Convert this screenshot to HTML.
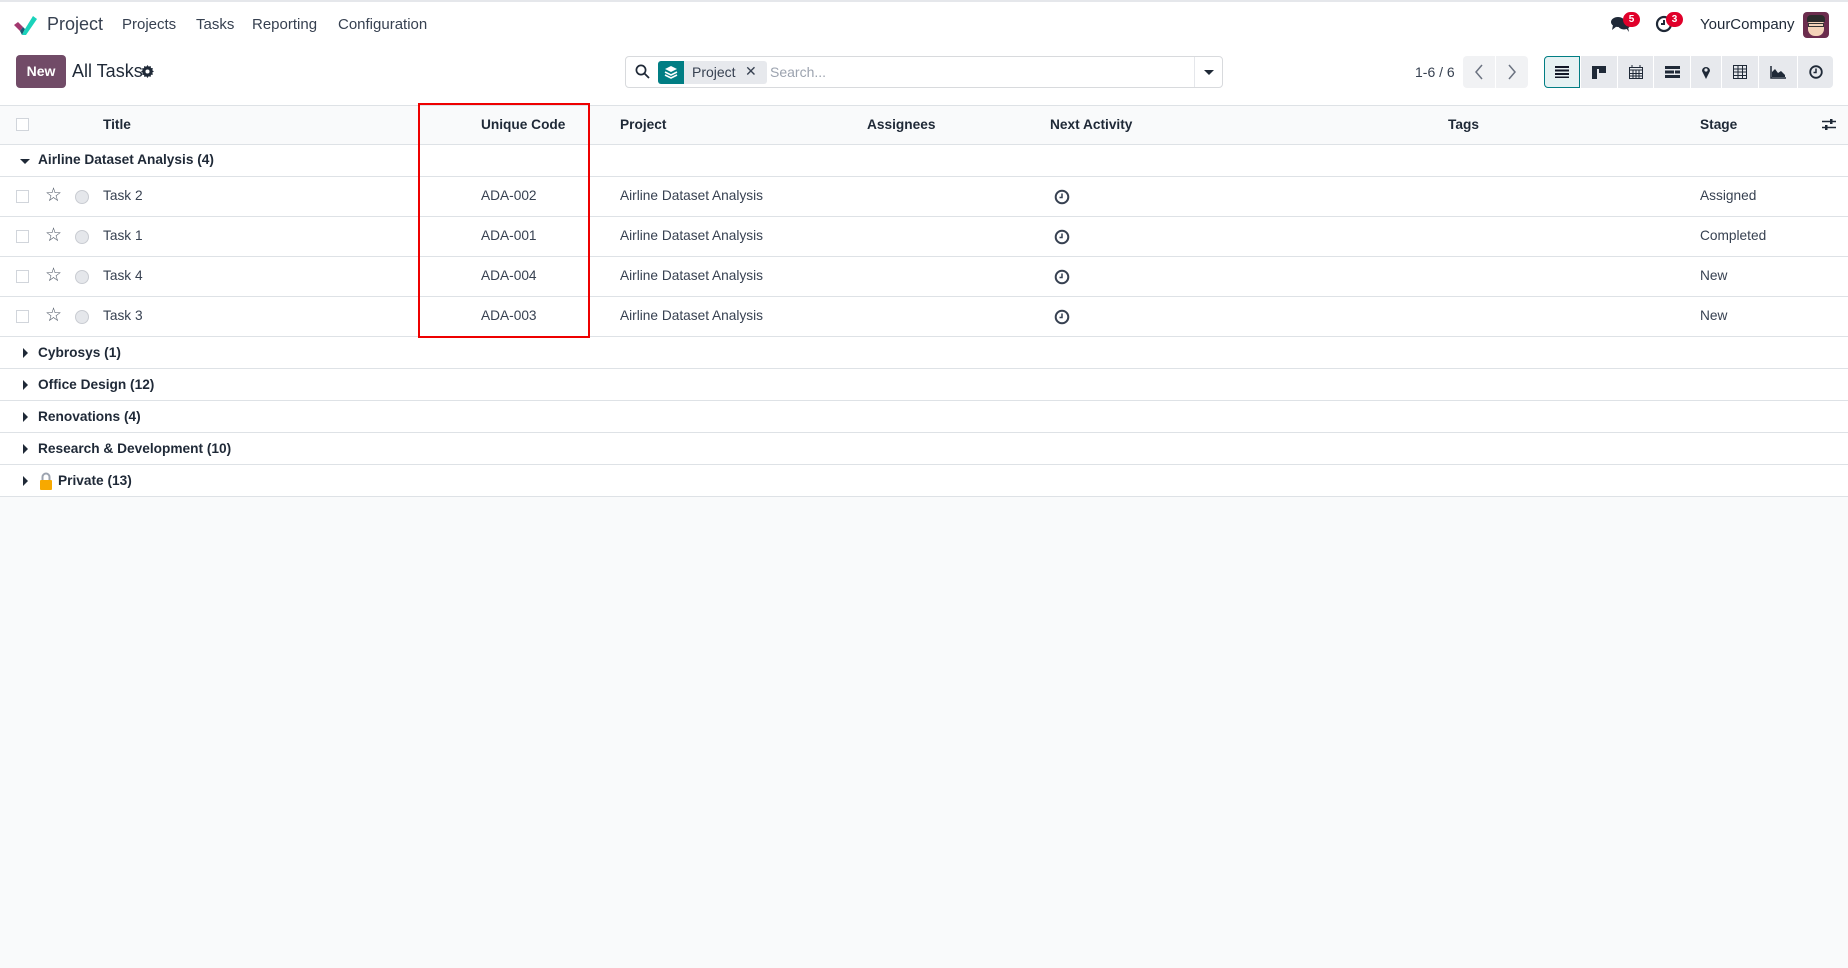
<!DOCTYPE html>
<html><head><meta charset="utf-8">
<style>
*{box-sizing:border-box;margin:0;padding:0}
body{width:1848px;height:968px;background:#f9fafb;font-family:"Liberation Sans",sans-serif;color:#374151;font-size:13.7px;position:relative;overflow:hidden}
.a{position:absolute}
.nav{left:0;top:0;width:1848px;height:50px;background:#fff;border-top:2px solid #e5e7eb}
.cp{left:0;top:50px;width:1848px;height:55px;background:#fff}
.row{position:absolute;left:0;width:1848px;background:#fff;border-bottom:1px solid #dee2e6}
.t{position:absolute;white-space:nowrap}
.b{font-weight:bold;color:#1f2937}
.cb{position:absolute;left:16px;width:13px;height:13px;border:1px solid #d1d5db;background:#fff}
.vb{position:absolute;top:56px;height:32px;background:#e7e9ed;display:flex;align-items:center;justify-content:center}
</style></head><body>
<div class="a nav"></div>
<svg class="a" style="left:13px;top:14px" width="24" height="22" viewBox="0 0 24 22">
<path d="M1 11 L5 8 L10 13 L7 17 Z" fill="#a3386f"/>
<path d="M7 17 L10 13 L12 15 L9 21 Z" fill="#1a5b76"/>
<path d="M9 21 L12 15 L20 2 L24 5 L13 21 Z" fill="#1ad3bb"/>
</svg>
<div class="t" style="left:47px;top:14px;font-size:18px;color:#374151">Project</div>
<div class="t" style="left:122px;top:16px;font-size:15px">Projects</div>
<div class="t" style="left:196px;top:16px;font-size:15px">Tasks</div>
<div class="t" style="left:252px;top:16px;font-size:15px">Reporting</div>
<div class="t" style="left:338px;top:16px;font-size:15px">Configuration</div>
<svg class="a" style="left:1610px;top:15px" width="22" height="18" viewBox="0 0 22 18"><ellipse cx="8" cy="7" rx="7" ry="5" fill="#1f2937"/><ellipse cx="14" cy="10" rx="6" ry="4.5" fill="#1f2937"/><path d="M3 10 L2 15 L7 11Z M16 13 L19 17 L18 12Z" fill="#1f2937"/></svg>
<div class="a" style="left:1623px;top:12px;width:17px;height:15px;border-radius:8px;background:#e0002a;color:#fff;font-size:10px;font-weight:bold;text-align:center;line-height:15px">5</div>
<svg class="a" style="left:1655px;top:15px" width="18" height="18" viewBox="0 0 18 18"><circle cx="9" cy="9" r="7" fill="none" stroke="#1f2937" stroke-width="2.2"/><path d="M9 5 V9 H6" stroke="#1f2937" stroke-width="2" fill="none"/></svg>
<div class="a" style="left:1666px;top:12px;width:17px;height:15px;border-radius:8px;background:#e0002a;color:#fff;font-size:10px;font-weight:bold;text-align:center;line-height:15px">3</div>
<div class="t" style="left:1700px;top:16px;font-size:15px;color:#1f2937">YourCompany</div>
<div class="a" style="left:1803px;top:12px;width:26px;height:26px;border-radius:4px;background:#6b2c4d;overflow:hidden">
<div class="a" style="left:5px;top:6px;width:16px;height:18px;border-radius:7px;background:#f3d3b8"></div>
<div class="a" style="left:4px;top:3px;width:18px;height:7px;border-radius:4px 4px 0 0;background:#2b2b2b"></div>
<div class="a" style="left:5px;top:11px;width:16px;height:4px;border:1px solid #333"></div>
</div>

<div class="a cp"></div>
<div class="a" style="left:16px;top:55px;width:50px;height:33px;background:#714b67;border-radius:4px;color:#fff;font-weight:bold;font-size:14px;text-align:center;line-height:33px">New</div>
<div class="t" style="left:72px;top:61px;font-size:18px;color:#1f2937">All Tasks</div>
<svg class="a" style="left:141px;top:65px" width="13" height="13" viewBox="0 0 16 16"><path d="M8 0l1.5 2 2.4-.8.3 2.5 2.5.3-.8 2.4 2 1.5-2 1.5.8 2.4-2.5.3-.3 2.5-2.4-.8L8 16l-1.5-2-2.4.8-.3-2.5-2.5-.3.8-2.4L0 8l2-1.5-.8-2.4 2.5-.3.3-2.5 2.4.8z" fill="#1f2937"/><circle cx="8" cy="8" r="2.5" fill="#fff"/></svg>
<div class="a" style="left:625px;top:56px;width:598px;height:32px;border:1px solid #d8dadd;border-radius:4px;background:#fff"></div>
<svg class="a" style="left:635px;top:64px" width="15" height="15" viewBox="0 0 15 15"><circle cx="6" cy="6" r="4.6" fill="none" stroke="#1f2937" stroke-width="1.7"/><path d="M9.5 9.5 L14 14" stroke="#1f2937" stroke-width="1.8"/></svg>
<div class="a" style="left:658px;top:61px;width:109px;height:23px;background:#e7e9ed;border-radius:3px"></div>
<div class="a" style="left:658px;top:61px;width:26px;height:23px;background:#017e84;border-radius:3px 0 0 3px"></div>
<svg class="a" style="left:663px;top:65px" width="16" height="15" viewBox="0 0 16 15"><path d="M8 1 L14 4 L8 7 L2 4Z" fill="#fff"/><path d="M2 7 L8 10 L14 7 M2 10 L8 13 L14 10" stroke="#fff" stroke-width="1.6" fill="none"/></svg>
<div class="t" style="left:692px;top:64px;font-size:14px">Project</div>
<div class="t" style="left:745px;top:63px;font-size:14px;color:#374151">✕</div>
<div class="t" style="left:770px;top:64px;font-size:14px;color:#9ca3af">Search...</div>
<div class="a" style="left:1194px;top:57px;width:1px;height:30px;background:#e5e7eb"></div>
<div class="a" style="left:1204px;top:70px;width:0;height:0;border-left:5px solid transparent;border-right:5px solid transparent;border-top:5px solid #1f2937"></div>
<div class="t" style="left:1415px;top:64px;font-size:14px">1-6 / 6</div>
<div class="a" style="left:1463px;top:56px;width:32px;height:32px;background:#f1f2f4;border-radius:4px 0 0 4px"></div>
<div class="a" style="left:1496px;top:56px;width:32px;height:32px;background:#f1f2f4;border-radius:0 4px 4px 0"></div>
<svg class="a" style="left:1474px;top:64px" width="10" height="16"><path d="M8 1 L2 8 L8 15" stroke="#6b7280" stroke-width="1.5" fill="none"/></svg>
<svg class="a" style="left:1507px;top:64px" width="10" height="16"><path d="M2 1 L8 8 L2 15" stroke="#6b7280" stroke-width="1.5" fill="none"/></svg>
<div class="vb" style="left:1544px;width:36px;background:#e6f2f3;border:1px solid #017e84;border-radius:4px 0 0 4px"><svg width="14" height="12"><path d="M0 1H14M0 4.5H14M0 8H14M0 11.5H14" stroke="#111827" stroke-width="2"/></svg></div>
<div class="vb" style="left:1581px;width:36px"><svg width="14" height="13"><rect x="0" y="0" width="14" height="3" fill="#1f2937"/><rect x="0" y="0" width="5" height="13" fill="#1f2937"/><rect x="7" y="0" width="7" height="7" fill="#1f2937"/></svg></div>
<div class="vb" style="left:1618px;width:35px"><svg width="14" height="14"><rect x="0.5" y="2.5" width="13" height="11" fill="none" stroke="#1f2937"/><path d="M0 5H14M3 2V0M11 2V0M0 8.5H14M0 11H14M4 5V14M7 5V14M10 5V14" stroke="#1f2937"/></svg></div>
<div class="vb" style="left:1654px;width:36px"><svg width="15" height="12"><rect x="0" y="0" width="15" height="3" fill="#1f2937"/><rect x="0" y="4.5" width="9" height="3" fill="#1f2937"/><rect x="10" y="4.5" width="5" height="3" fill="#1f2937"/><rect x="0" y="9" width="15" height="3" fill="#1f2937"/></svg></div>
<div class="vb" style="left:1691px;width:30px"><svg width="10" height="14"><path d="M5 14 L1 6 A4 4 0 1 1 9 6Z" fill="#1f2937"/><circle cx="5" cy="5" r="1.6" fill="#e7e9ed"/></svg></div>
<div class="vb" style="left:1722px;width:36px"><svg width="14" height="14"><rect x="0.5" y="0.5" width="13" height="13" fill="none" stroke="#1f2937"/><path d="M0 4H14M0 7H14M0 10.5H14M5 0V14M9.5 0V14" stroke="#1f2937"/></svg></div>
<div class="vb" style="left:1759px;width:38px"><svg width="16" height="13"><path d="M1 0V12H16" stroke="#1f2937" stroke-width="1.5" fill="none"/><path d="M2 11 L2 6 L5 3 L8 7 L11 5 L15 9 L15 11Z" fill="#1f2937"/></svg></div>
<div class="vb" style="left:1798px;width:35px;border-radius:0 4px 4px 0"><svg width="14" height="14"><circle cx="7" cy="7" r="5.8" fill="none" stroke="#1f2937" stroke-width="1.8"/><path d="M7 3.5V7.5H4.5" stroke="#1f2937" stroke-width="1.5" fill="none"/></svg></div>

<div class="row" style="top:105px;height:40px;background:#f9fafb;border-top:1px solid #dee2e6"></div>
<div class="cb" style="top:118px"></div>
<div class="t b" style="left:103px;top:117px">Title</div>
<div class="t b" style="left:481px;top:117px">Unique Code</div>
<div class="t b" style="left:620px;top:117px">Project</div>
<div class="t b" style="left:867px;top:117px">Assignees</div>
<div class="t b" style="left:1050px;top:117px">Next Activity</div>
<div class="t b" style="left:1448px;top:117px">Tags</div>
<div class="t b" style="left:1700px;top:117px">Stage</div>
<svg class="a" style="left:1822px;top:118px" width="14" height="13"><path d="M0 3.5H14M0 9.5H14" stroke="#1f2937" stroke-width="1.5"/><rect x="8" y="1" width="2.5" height="5" fill="#1f2937"/><rect x="3" y="7" width="2.5" height="5" fill="#1f2937"/></svg>

<div class="row" style="top:145px;height:32px"></div>
<div class="a" style="left:20px;top:159px;border-left:5px solid transparent;border-right:5px solid transparent;border-top:5px solid #1f2937"></div>
<div class="t b" style="left:38px;top:152px">Airline Dataset Analysis (4)</div>

<div class="row" style="top:177px;height:40px"></div>
<div class="row" style="top:217px;height:40px"></div>
<div class="row" style="top:257px;height:40px"></div>
<div class="row" style="top:297px;height:40px"></div>

<div class="cb" style="top:190px"></div><div class="cb" style="top:230px"></div><div class="cb" style="top:270px"></div><div class="cb" style="top:310px"></div>
<div class="t" style="left:45px;top:184px;font-size:19px;color:#4b5563">☆</div>
<div class="t" style="left:45px;top:224px;font-size:19px;color:#4b5563">☆</div>
<div class="t" style="left:45px;top:264px;font-size:19px;color:#4b5563">☆</div>
<div class="t" style="left:45px;top:304px;font-size:19px;color:#4b5563">☆</div>
<div class="a" style="left:75px;top:190px;width:14px;height:14px;border-radius:50%;background:#e5e7eb;border:1px solid #c9ccd2"></div>
<div class="a" style="left:75px;top:230px;width:14px;height:14px;border-radius:50%;background:#e5e7eb;border:1px solid #c9ccd2"></div>
<div class="a" style="left:75px;top:270px;width:14px;height:14px;border-radius:50%;background:#e5e7eb;border:1px solid #c9ccd2"></div>
<div class="a" style="left:75px;top:310px;width:14px;height:14px;border-radius:50%;background:#e5e7eb;border:1px solid #c9ccd2"></div>

<div class="t" style="left:103px;top:188px">Task 2</div>
<div class="t" style="left:103px;top:228px">Task 1</div>
<div class="t" style="left:103px;top:268px">Task 4</div>
<div class="t" style="left:103px;top:308px">Task 3</div>
<div class="t" style="left:481px;top:188px">ADA-002</div>
<div class="t" style="left:481px;top:228px">ADA-001</div>
<div class="t" style="left:481px;top:268px">ADA-004</div>
<div class="t" style="left:481px;top:308px">ADA-003</div>
<div class="t" style="left:620px;top:188px">Airline Dataset Analysis</div>
<div class="t" style="left:620px;top:228px">Airline Dataset Analysis</div>
<div class="t" style="left:620px;top:268px">Airline Dataset Analysis</div>
<div class="t" style="left:620px;top:308px">Airline Dataset Analysis</div>
<svg class="a" style="left:1054px;top:189px" width="16" height="16"><circle cx="8" cy="8" r="6.3" fill="none" stroke="#374151" stroke-width="2"/><path d="M8 4.5V8.5H5.5" stroke="#374151" stroke-width="1.5" fill="none"/></svg>
<svg class="a" style="left:1054px;top:229px" width="16" height="16"><circle cx="8" cy="8" r="6.3" fill="none" stroke="#374151" stroke-width="2"/><path d="M8 4.5V8.5H5.5" stroke="#374151" stroke-width="1.5" fill="none"/></svg>
<svg class="a" style="left:1054px;top:269px" width="16" height="16"><circle cx="8" cy="8" r="6.3" fill="none" stroke="#374151" stroke-width="2"/><path d="M8 4.5V8.5H5.5" stroke="#374151" stroke-width="1.5" fill="none"/></svg>
<svg class="a" style="left:1054px;top:309px" width="16" height="16"><circle cx="8" cy="8" r="6.3" fill="none" stroke="#374151" stroke-width="2"/><path d="M8 4.5V8.5H5.5" stroke="#374151" stroke-width="1.5" fill="none"/></svg>
<div class="t" style="left:1700px;top:188px">Assigned</div>
<div class="t" style="left:1700px;top:228px">Completed</div>
<div class="t" style="left:1700px;top:268px">New</div>
<div class="t" style="left:1700px;top:308px">New</div>

<div class="row" style="top:337px;height:32px"></div>
<div class="row" style="top:369px;height:32px"></div>
<div class="row" style="top:401px;height:32px"></div>
<div class="row" style="top:433px;height:32px"></div>
<div class="row" style="top:465px;height:32px"></div>
<div class="a" style="left:23px;top:348px;border-top:5px solid transparent;border-bottom:5px solid transparent;border-left:5px solid #1f2937"></div>
<div class="a" style="left:23px;top:380px;border-top:5px solid transparent;border-bottom:5px solid transparent;border-left:5px solid #1f2937"></div>
<div class="a" style="left:23px;top:412px;border-top:5px solid transparent;border-bottom:5px solid transparent;border-left:5px solid #1f2937"></div>
<div class="a" style="left:23px;top:444px;border-top:5px solid transparent;border-bottom:5px solid transparent;border-left:5px solid #1f2937"></div>
<div class="a" style="left:23px;top:476px;border-top:5px solid transparent;border-bottom:5px solid transparent;border-left:5px solid #1f2937"></div>
<div class="t b" style="left:38px;top:345px">Cybrosys (1)</div>
<div class="t b" style="left:38px;top:377px">Office Design (12)</div>
<div class="t b" style="left:38px;top:409px">Renovations (4)</div>
<div class="t b" style="left:38px;top:441px">Research &amp; Development (10)</div>
<svg class="a" style="left:39px;top:472px" width="14" height="18"><path d="M3.5 8V5A3.5 3.5 0 0 1 10.5 5V8" stroke="#9ca3af" stroke-width="2" fill="none"/><rect x="1" y="8" width="12" height="10" rx="1" fill="#f7a900"/></svg>
<div class="t b" style="left:58px;top:473px">Private (13)</div>

<div class="a" style="left:418px;top:103px;width:172px;height:235px;border:2px solid #ee0000"></div>
</body></html>
